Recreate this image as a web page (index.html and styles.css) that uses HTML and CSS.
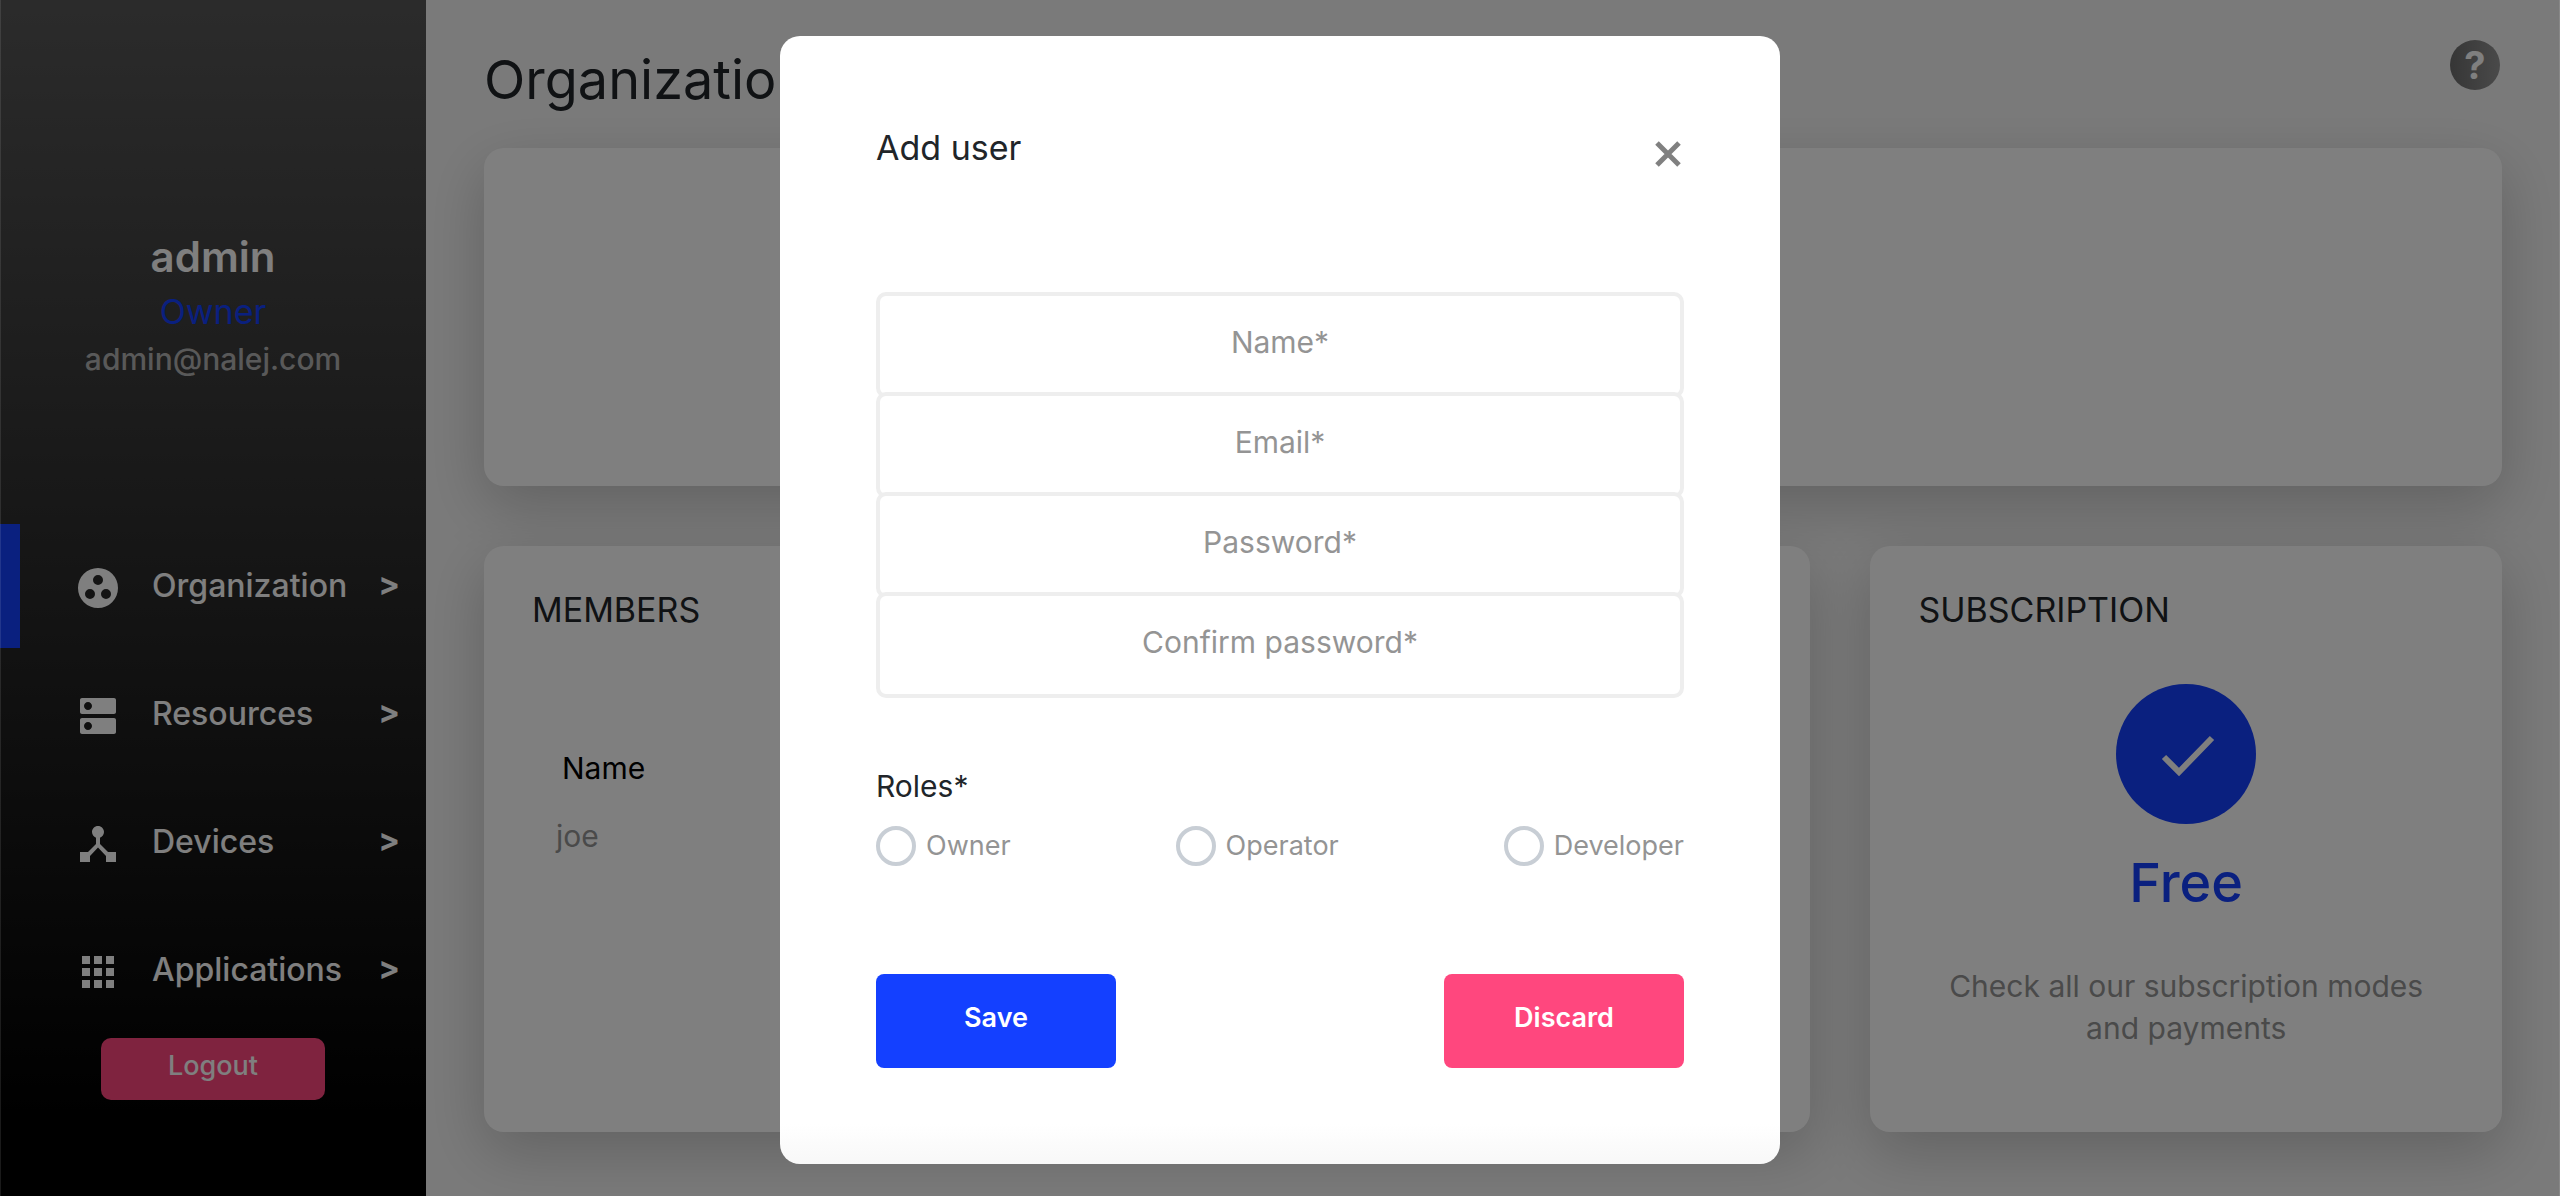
FILE: index.html
```html
<!DOCTYPE html>
<html lang="en">
<head>
<meta charset="utf-8">
<meta name="viewport" content="width=device-width, initial-scale=1">
<title>Organization</title>
<link rel="stylesheet" href="styles.css">
</head>
<body>
<div class="app">
  <aside class="sidebar">
    <div class="profile">
      <p class="profile-name">admin</p>
      <p class="profile-role">Owner</p>
      <p class="profile-email">admin@nalej.com</p>
    </div>
    <nav class="nav">
      <a class="nav-item active" href="#organization">
        <svg class="nav-icon" viewBox="0 0 24 24" aria-hidden="true"><path fill="currentColor" fill-rule="evenodd" d="M12 2a10 10 0 1 0 0 20a10 10 0 1 0 0-20zM12 5.500a2.500 2.500 0 1 1 0 5a2.500 2.500 0 1 1 0-5zM8 12.500a2.500 2.500 0 1 1 0 5a2.500 2.500 0 1 1 0-5zM16 12.500a2.500 2.500 0 1 1 0 5a2.500 2.500 0 1 1 0-5z"/></svg>
        <span>Organization</span><span class="nav-arrow">&gt;</span>
      </a>
      <a class="nav-item" href="#resources">
        <svg class="nav-icon" viewBox="0 0 24 24" aria-hidden="true"><path fill="currentColor" fill-rule="evenodd" d="M20 13H4c-.55 0-1 .45-1 1v6c0 .55.45 1 1 1h16c.55 0 1-.45 1-1v-6c0-.55-.45-1-1-1zM7 19c-1.100 0-2-.9-2-2s.9-2 2-2 2 .9 2 2-.9 2-2 2zM20 3H4c-.55 0-1 .45-1 1v6c0 .55.45 1 1 1h16c.55 0 1-.45 1-1V4c0-.55-.45-1-1-1zM7 9c-1.100 0-2-.9-2-2s.9-2 2-2 2 .9 2 2-.9 2-2 2z"/></svg>
        <span>Resources</span><span class="nav-arrow">&gt;</span>
      </a>
      <a class="nav-item" href="#devices">
        <svg class="nav-icon" viewBox="0 0 24 24" aria-hidden="true"><path fill="currentColor" d="M17 16l-4-4V8.820C14.160 8.400 15 7.300 15 6c0-1.660-1.340-3-3-3S9 4.340 9 6c0 1.300.84 2.400 2 2.820V12l-4 4H3v5h5v-3.050l4-4.200 4 4.200V21h5v-5h-4z"/></svg>
        <span>Devices</span><span class="nav-arrow">&gt;</span>
      </a>
      <a class="nav-item" href="#applications">
        <svg class="nav-icon" viewBox="0 0 24 24" aria-hidden="true"><path fill="currentColor" d="M4 4h4v4H4zM10 4h4v4h-4zM16 4h4v4h-4zM4 10h4v4H4zM10 10h4v4h-4zM16 10h4v4h-4zM4 16h4v4H4zM10 16h4v4h-4zM16 16h4v4h-4z"/></svg>
        <span>Applications</span><span class="nav-arrow">&gt;</span>
      </a>
    </nav>
    <button class="logout" type="button">Logout</button>
  </aside>

  <main class="main">
    <header class="page-header">
      <h1 class="page-title">Organization</h1>
      <button class="help" type="button" aria-label="Help">?</button>
    </header>
    <div class="cards">
      <section class="card summary"></section>
      <section class="card detail">
        <h2 class="card-title">MEMBERS</h2>
        <table class="members">
          <thead><tr><th>Name</th></tr></thead>
          <tbody><tr><td>joe</td></tr></tbody>
        </table>
      </section>
      <section class="card detail">
        <h2 class="card-title">SUBSCRIPTION</h2>
        <div class="plan">
          <svg class="plan-badge" viewBox="0 0 140 140" aria-hidden="true"><circle cx="70" cy="70" r="70" fill="#1440ff"/><path d="M48 73l15 15 33-34" fill="none" stroke="#fff" stroke-width="6"/></svg>
          <p class="plan-name">Free</p>
          <p class="plan-text">Check all our subscription modes and payments</p>
        </div>
      </section>
    </div>
  </main>
</div>

<div class="overlay">
  <form class="modal" role="dialog" aria-labelledby="modal-title">
    <header class="modal-header">
      <h2 class="modal-title" id="modal-title">Add user</h2>
      <button class="close" type="button" aria-label="Close">
        <svg viewBox="0 0 26 26" aria-hidden="true"><path d="M2 2l22 22M24 2L2 24" fill="none" stroke="currentColor" stroke-width="5"/></svg>
      </button>
    </header>
    <div class="fields">
      <input class="field" type="text" placeholder="Name*" aria-label="Name">
      <input class="field" type="email" placeholder="Email*" aria-label="Email">
      <input class="field" type="password" placeholder="Password*" aria-label="Password">
      <input class="field" type="password" placeholder="Confirm password*" aria-label="Confirm password">
    </div>
    <fieldset class="roles">
      <legend class="roles-title">Roles*</legend>
      <div class="roles-list">
        <label class="role"><input type="radio" name="role" value="owner">Owner</label>
        <label class="role"><input type="radio" name="role" value="operator">Operator</label>
        <label class="role"><input type="radio" name="role" value="developer">Developer</label>
      </div>
    </fieldset>
    <div class="actions">
      <button class="action save" type="submit">Save</button>
      <button class="action discard" type="button">Discard</button>
    </div>
  </form>
</div>
</body>
</html>
```

FILE: styles.css
```css
* {
  box-sizing: border-box;
}

body {
  margin: 0;
  background: #f5f5f5;
  color: #212529;
  font-family: Inter, "Open Sans", sans-serif;
  font-size: 30px;
}

h1, h2, p {
  margin: 0;
  font-weight: 400;
}

button, input {
  font-family: inherit;
}

button {
  border: 0;
  cursor: pointer;
}

.app {
  display: flex;
  min-height: 100vh;
}

/* Sidebar */
.sidebar {
  flex: 0 0 426px;
  display: flex;
  flex-direction: column;
  padding: 227px 0 60px;
  background: linear-gradient(#575757, #000 94%);
  color: #fff;
}

.profile {
  margin-bottom: 143px;
  text-align: center;
}

.profile-name {
  font-size: 42px;
  line-height: 60px;
  font-weight: 600;
}

.profile-role {
  font-size: 34px;
  line-height: 50px;
  color: #1440ff;
}

.profile-email {
  font-size: 30px;
  line-height: 44px;
  font-weight: 500;
  color: #b3b3b3;
}

.nav {
  display: flex;
  flex-direction: column;
  gap: 4px;
}

.nav-item {
  display: flex;
  align-items: center;
  gap: 30px;
  height: 124px;
  padding: 0 26px 0 54px;
  border-left: 20px solid transparent;
  color: #fff;
  font-size: 32px;
  line-height: 40px;
  font-weight: 500;
  text-decoration: none;
}

.nav-item.active {
  border-left-color: #1440ff;
}

.nav-icon {
  flex: none;
  width: 48px;
  height: 48px;
  margin-top: 4px;
}

.nav-arrow {
  margin-left: auto;
  padding-bottom: 4px;
  font-weight: 700;
}

.logout {
  width: 224px;
  height: 62px;
  margin: 6px auto 0;
  padding: 0 0 8px;
  border-radius: 10px;
  background: #ff477e;
  color: #fff;
  font-size: 27px;
  font-weight: 500;
}

/* Page content */
.main {
  flex: 1;
  min-width: 0;
  padding: 40px 58px 64px;
}

.page-header {
  display: flex;
  justify-content: space-between;
  align-items: flex-start;
  margin-bottom: 38px;
  padding-right: 2px;
}

.page-title {
  padding-top: 10px;
  font-size: 54px;
  line-height: 60px;
}

.help {
  width: 50px;
  height: 50px;
  padding: 0;
  border-radius: 50%;
  background: linear-gradient(90deg, #6c6c6c, #949494);
  color: #fff;
  font-size: 38px;
  line-height: 50px;
  font-weight: 700;
}

.cards {
  display: grid;
  grid-template-columns: 21fr 10fr;
  gap: 60px;
}

.card {
  border-radius: 20px;
  background: #fff;
  box-shadow: 0 20px 60px rgba(0, 0, 0, 0.2);
}

.summary {
  grid-column: 1 / -1;
  min-height: 338px;
}

.detail {
  min-height: 586px;
  padding: 44px 48px;
}

.card-title {
  font-size: 34px;
  line-height: 40px;
}

.members {
  margin-top: 118px;
  border-collapse: collapse;
  line-height: 40px;
  text-align: left;
}

.members th {
  padding: 0 0 0 30px;
  color: #000;
  font-weight: 400;
}

.members td {
  padding: 28px 0 0 24px;
  color: #949494;
}

.plan {
  display: flex;
  flex-direction: column;
  align-items: center;
  margin-top: 54px;
  text-align: center;
}

.plan-badge {
  width: 140px;
  height: 140px;
}

.plan-name {
  margin: 29px 0 52px;
  color: #1440ff;
  font-size: 54px;
  line-height: 60px;
  font-weight: 500;
}

.plan-text {
  max-width: 500px;
  color: #949494;
  font-size: 30px;
  line-height: 42px;
}

/* Dialog */
.overlay {
  position: fixed;
  inset: 0;
  display: flex;
  justify-content: center;
  align-items: flex-start;
  padding: 36px;
  overflow: auto;
  background: rgba(0, 0, 0, 0.5);
  box-shadow: inset 1px 0 rgba(255, 255, 255, 0.1), inset -1px 0 rgba(255, 255, 255, 0.1);
}

.modal {
  width: 1000px;
  padding: 92px 96px 96px;
  border-radius: 20px;
  background: linear-gradient(to top, #f8f8f8, #fff 40px);
}

.modal-header {
  display: flex;
  justify-content: space-between;
  margin-bottom: 124px;
}

.modal-title {
  font-size: 34px;
  line-height: 40px;
}

.close {
  display: flex;
  justify-content: center;
  align-items: center;
  width: 32px;
  height: 52px;
  margin-bottom: -12px;
  padding: 0;
  background: none;
  color: #808080;
}

.close svg {
  width: 26px;
  height: 26px;
}

.fields {
  display: flex;
  flex-direction: column;
}

.field {
  height: 106px;
  padding: 0 20px 6px;
  border: 4px solid #eee;
  border-radius: 10px;
  background: #fff;
  color: #212529;
  font-size: 30px;
  text-align: center;
}

.field + .field {
  margin-top: -6px;
}

.field::placeholder {
  color: #949494;
  opacity: 1;
}

.roles {
  margin: 68px 0 0;
  padding: 0;
  border: 0;
}

.roles-title {
  padding: 0;
  line-height: 40px;
}

.roles-list {
  display: flex;
  justify-content: space-between;
  margin-top: 20px;
}

.role {
  display: flex;
  align-items: center;
  gap: 10px;
  color: #949494;
  font-size: 27px;
  line-height: 40px;
}

.role input {
  appearance: none;
  width: 40px;
  height: 40px;
  margin: 0;
  border: 4px solid #c8ced5;
  border-radius: 50%;
  background: #fff;
}

.role input:checked {
  border-width: 12px;
  border-color: #1440ff;
}

.actions {
  display: flex;
  justify-content: space-between;
  margin-top: 108px;
}

.action {
  width: 240px;
  height: 94px;
  padding: 0 0 8px;
  border-radius: 8px;
  color: #fff;
  font-size: 27px;
  font-weight: 600;
}

.save {
  background: #1440ff;
}

.discard {
  background: #ff477e;
}
```
